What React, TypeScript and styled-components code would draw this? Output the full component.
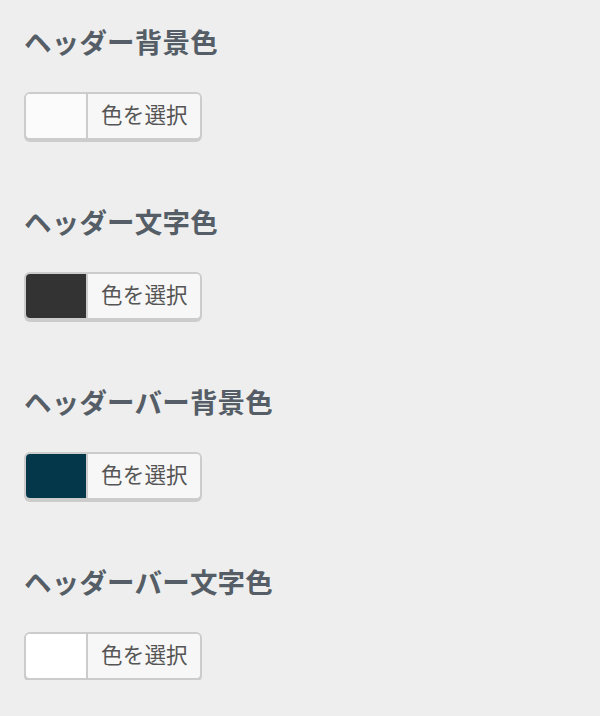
import React from "react";
import styled, { createGlobalStyle } from "styled-components";

const Global = createGlobalStyle`
  html, body { margin: 0; padding: 0; background: #eeeeee; }
  body { font-family: "Noto Sans CJK JP", "Noto Sans", sans-serif; }
`;

const Page = styled.div`
  padding: 24px 24px 0 24px;
  display: flex;
  flex-direction: column;
  gap: 64px;
`;

const Control = styled.div`
  display: flex;
  flex-direction: column;
  align-items: flex-start;
  gap: 34px;
`;

const Title = styled.h3`
  margin: 0;
  font-size: 27.5px;
  line-height: 34px;
  font-weight: 700;
  color: #555d66;
  letter-spacing: 0.2px;
`;

const ColorButton = styled.button`
  display: flex;
  align-items: stretch;
  padding: 0;
  margin: 0;
  height: 48px;
  border: 2px solid #cccccc;
  border-radius: 6px;
  box-shadow: 0 2px 0 #cccccc;
  background: #f7f7f7;
  overflow: hidden;
  cursor: pointer;
`;

const Swatch = styled.span<{ $color: string }>`
  width: 60px;
  background: ${(p) => p.$color};
`;

const Label = styled.span`
  display: flex;
  align-items: center;
  padding: 0 12px 6px 13px;
  border-left: 2px solid #cccccc;
  background: #f7f7f7;
  color: #555555;
  font-family: "Noto Sans CJK JP", sans-serif;
  font-size: 21.5px;
  letter-spacing: 0.2px;
`;

const items = [
  { title: "ヘッダー背景色", color: "#fbfbfb" },
  { title: "ヘッダー文字色", color: "#333333" },
  { title: "ヘッダーバー背景色", color: "#05374b" },
  { title: "ヘッダーバー文字色", color: "#ffffff" },
];

export default function App() {
  return (
    <>
      <Global />
      <Page>
        {items.map((it) => (
          <Control key={it.title}>
            <Title>{it.title}</Title>
            <ColorButton type="button">
              <Swatch $color={it.color} />
              <Label>色を選択</Label>
            </ColorButton>
          </Control>
        ))}
      </Page>
    </>
  );
}
